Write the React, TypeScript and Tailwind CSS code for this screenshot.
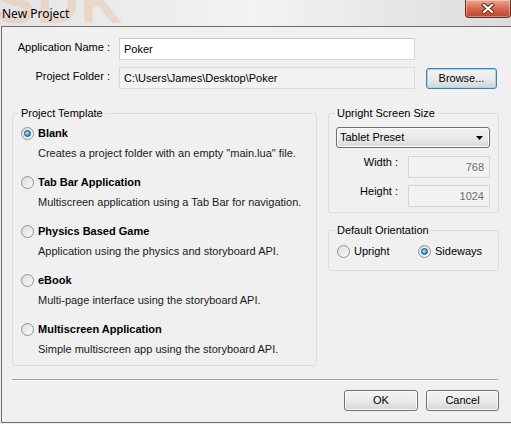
import React from 'react';

const font = { fontFamily: '"Liberation Sans", Arial, sans-serif' };

const Radio: React.FC<{ checked?: boolean }> = ({ checked }) => (
  <span className="flex h-[13px] w-[13px] shrink-0 items-center justify-center rounded-full border border-[#8f9092] bg-gradient-to-br from-[#dcdcdc] to-[#fbfbfb]">
    {checked && (
      <span className="h-[7px] w-[7px] rounded-full border border-[#1b4f7a] bg-[radial-gradient(circle_at_40%_40%,#bfe8ff,#3a9ad9_60%,#1a5e94)]" />
    )}
  </span>
);

const WinButton: React.FC<{ label: string; focused?: boolean; className?: string }> = ({
  label,
  focused,
  className,
}) => (
  <div
    className={
      'flex h-[21px] items-center justify-center rounded-[3px] border bg-gradient-to-b from-[#f2f2f2] via-[#ebebeb] to-[#d4d4d4] text-[11px] text-black ' +
      (focused ? 'border-[#3c7fb1] shadow-[inset_0_0_0_1px_#a4d8f2]' : 'border-[#707070] shadow-[inset_0_0_0_1px_#fcfcfc]') +
      ' ' +
      (className ?? '')
    }
  >
    {label}
  </div>
);

const templates = [
  { title: 'Blank', desc: 'Creates a project folder with an empty "main.lua" file.', checked: true },
  { title: 'Tab Bar Application', desc: 'Multiscreen application using a Tab Bar for navigation.' },
  { title: 'Physics Based Game', desc: 'Application using the physics and storyboard API.' },
  { title: 'eBook', desc: 'Multi-page interface using the storyboard API.' },
  { title: 'Multiscreen Application', desc: 'Simple multiscreen app using the storyboard API.' },
];

export default function App() {
  return (
    <div className="h-[424px] w-[511px] overflow-hidden bg-[#f0f0f0] text-[11px] text-black" style={font}>
      {/* title bar */}
      <div className="relative flex h-[26px] items-center overflow-hidden bg-gradient-to-r from-[#e4e4e4] via-[#f3f3f3] to-[#dcdcdc]">
        <span
          aria-hidden
          className="pointer-events-none absolute -top-[26px] left-[-4px] select-none text-[58px] font-bold leading-none tracking-[2px] text-[#e9a56a] opacity-25"
        >
          SDK
        </span>
        <span
          className="relative ml-[2px] mt-[2px] text-[12px] text-black"
          style={{ fontFamily: '"Noto Sans", "Open Sans", sans-serif' }}
        >
          New Project
        </span>
        <div className="absolute right-0 top-0 flex h-[18px] w-[46px] items-center justify-center rounded-b-[4px] border border-t-0 border-[#6e2a1e] bg-gradient-to-b from-[#eaa793] via-[#d66a50] to-[#c2432b] shadow-[inset_0_0_0_1px_rgba(255,255,255,0.35)]">
          <svg width="14" height="11" viewBox="0 0 14 11">
            <path d="M3 2 L11 9 M11 2 L3 9" stroke="#5a2418" strokeWidth="4" strokeLinecap="square" />
            <path d="M3 2 L11 9 M11 2 L3 9" stroke="#ffffff" strokeWidth="2.2" strokeLinecap="square" />
          </svg>
        </div>
      </div>

      {/* client area */}
      <div className="ml-[1px] h-[397px] border-b border-l border-t border-[#6d6d6d] pl-[10px] pt-[11px]">
        <div className="flex h-[22px] items-center">
          <div className="w-[98px] pb-[3px] text-right">Application Name :</div>
          <div className="ml-[9px] flex h-[22px] w-[296px] items-center border border-[#d6d6d6] border-t-[#c7c7c7] bg-white pl-[4px]">
            Poker
          </div>
        </div>
        <div className="mt-[7px] flex h-[22px] items-center">
          <div className="w-[98px] pb-[3px] text-right">Project Folder :</div>
          <div className="ml-[9px] flex h-[22px] w-[296px] items-center border border-[#dadada] bg-[#f2f2f2] pl-[4px]">
            C:\Users\James\Desktop\Poker
          </div>
          <WinButton label="Browse..." focused className="ml-[11px] mt-[1px] w-[71px]" />
        </div>

        <div className="mt-[18px] flex">
          <fieldset className="h-[259px] w-[305px] rounded-[3px] border border-[#d5dfe5]">
            <legend className="ml-[6px] px-[2px] leading-[13px]">Project Template</legend>
            <div className="flex flex-col gap-[13px] pl-[8px] pt-[5px]">
              {templates.map((t) => (
                <div key={t.title} className="flex flex-col gap-[4px]">
                  <div className="flex h-[16px] items-center gap-[4px]">
                    <Radio checked={t.checked} />
                    <span className="font-bold">{t.title}</span>
                  </div>
                  <div className="flex h-[16px] items-center pl-[17px] text-[#1a1a1a]">{t.desc}</div>
                </div>
              ))}
            </div>
          </fieldset>

          <div className="ml-[11px] flex w-[171px] flex-col gap-[11px]">
            <fieldset className="h-[106px] rounded-[3px] border border-[#d5dfe5]">
              <legend className="ml-[6px] px-[2px] leading-[13px]">Upright Screen Size</legend>
              <div className="px-[7px]">
                <div className="mt-[7px] flex h-[21px] w-[154px] items-center justify-between rounded-[3px] border border-[#707070] bg-gradient-to-b from-[#f2f2f2] via-[#ebebeb] to-[#d8d8d8] pl-[3px] pr-[6px] shadow-[inset_0_0_0_1px_#fcfcfc]">
                  <span>Tablet Preset</span>
                  <svg width="7" height="4" viewBox="0 0 7 4">
                    <path d="M0 0 H7 L3.5 4 Z" fill="#000" />
                  </svg>
                </div>
                <div className="mt-[8px] flex h-[22px] items-center">
                  <div className="w-[62px] pb-[10px] text-right">Width :</div>
                  <div className="ml-[10px] flex h-[22px] w-[82px] items-center justify-end border border-[#d5d5d5] bg-[#f2f2f2] pr-[5px] text-[#6d6d6d]">
                    768
                  </div>
                </div>
                <div className="mt-[7px] flex h-[22px] items-center">
                  <div className="w-[62px] pb-[10px] text-right">Height :</div>
                  <div className="ml-[10px] flex h-[22px] w-[82px] items-center justify-end border border-[#d5d5d5] bg-[#f2f2f2] pr-[5px] text-[#6d6d6d]">
                    1024
                  </div>
                </div>
              </div>
            </fieldset>

            <fieldset className="h-[47px] rounded-[3px] border border-[#d5dfe5]">
              <legend className="ml-[6px] px-[2px] leading-[13px]">Default Orientation</legend>
              <div className="mt-[6px] flex h-[16px] items-center px-[8px]">
                <div className="flex w-[81px] items-center gap-[4px]">
                  <Radio />
                  <span>Upright</span>
                </div>
                <div className="flex items-center gap-[4px]">
                  <Radio checked />
                  <span>Sideways</span>
                </div>
              </div>
            </fieldset>
          </div>
        </div>

        <div className="mt-[13px] w-[486px] border-b border-t border-b-white border-t-[#a0a0a0]" />

        <div className="mt-[9px] flex w-[487px] justify-end gap-[8px]">
          <WinButton label="OK" className="w-[74px]" />
          <WinButton label="Cancel" className="w-[73px]" />
        </div>
      </div>
    </div>
  );
}
